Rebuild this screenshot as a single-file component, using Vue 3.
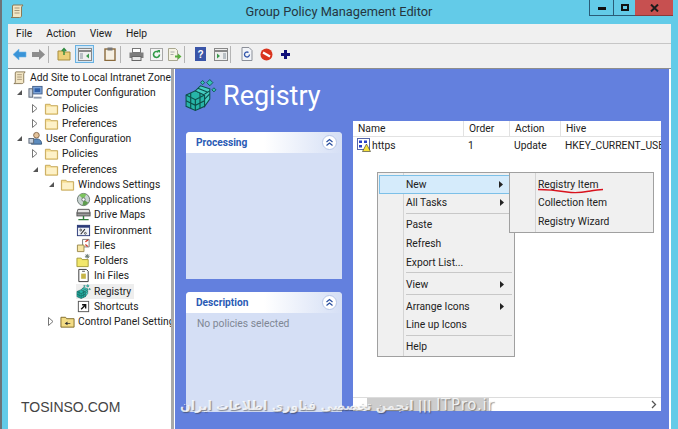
<template>
  <div class="window">
    <svg class="defs" width="0" height="0">
      <defs>
        <symbol id="ico-folder" viewBox="0 0 16 16">
          <path d="M1.500 3.500h5l1 1.500h7v9h-13z" fill="#f6dc8e" stroke="#c4a85a" />
          <path d="M2.500 6h11v7h-11z" fill="#fdf1c8" />
        </symbol>
        <symbol id="ico-script" viewBox="0 0 16 16">
          <path d="M4 2h10l-1.500 2v9c0 1-1 1.500-2 1.500H2c1 0 1.500-.5 1.500-1.500V3z" fill="#f3e6c4" stroke="#8a7a58" />
          <path d="M5.500 5h5M5.500 7.500h5M5.500 10h5" stroke="#a8987a" />
        </symbol>
        <symbol id="ico-computer" viewBox="0 0 16 16">
          <rect x="5" y="1.500" width="10" height="8" fill="#7da4d8" stroke="#44618c" />
          <rect x="1" y="4" width="4" height="9" fill="#c5cfdc" stroke="#5b6675" />
          <path d="M6 12.500h8.500v2H6z" fill="#8f9bad" />
          <path d="M7 3.500h6v4H7z" fill="#2f5fa8" />
        </symbol>
        <symbol id="ico-user" viewBox="0 0 16 16">
          <circle cx="9" cy="4.500" r="3" fill="#e3c39c" stroke="#85684a" />
          <path d="M3.500 14c0-4 2-5.500 5.500-5.500s5.500 1.500 5.500 5.500z" fill="#5c8bbd" stroke="#37597f" />
          <rect x="1" y="8" width="5" height="5" fill="#c5cfdc" stroke="#5b6675" />
        </symbol>
        <symbol id="ico-apps" viewBox="0 0 16 16">
          <circle cx="8" cy="8" r="6.500" fill="#c9d4d2" stroke="#66736f" />
          <path d="M8 8 3.500 3.500A6.500 6.500 0 0 1 11 2.500z" fill="#7cc35e" />
          <path d="M8 8l5 3.500A6.500 6.500 0 0 1 7 14.400z" fill="#5e9d4d" />
          <circle cx="8" cy="8" r="1.800" fill="#fff" stroke="#66736f" />
        </symbol>
        <symbol id="ico-drive" viewBox="0 0 16 16">
          <path d="M2 2.500h12l1 4H1z" fill="#e4e4e4" stroke="#555" />
          <rect x="1" y="6.500" width="14" height="3" fill="#9c9c9c" stroke="#555" />
          <path d="M8 9.500V13M2.500 13.500h11" stroke="#2f7d3a" stroke-width="1.500" />
        </symbol>
        <symbol id="ico-env" viewBox="0 0 16 16">
          <rect x="1.500" y="2.500" width="13" height="11" fill="#eef1f7" stroke="#2b3a78" />
          <rect x="1.500" y="2.500" width="13" height="2.500" fill="#2b3a78" />
          <path d="M5 12l4.500-5.500" stroke="#333" stroke-width="1.200" />
          <circle cx="5" cy="7.500" r="1" fill="none" stroke="#333" stroke-width=".8" />
          <circle cx="10" cy="11" r="1" fill="none" stroke="#333" stroke-width=".8" />
        </symbol>
        <symbol id="ico-files" viewBox="0 0 16 16">
          <path d="M7 1.500h7v8H7z" fill="#fff" stroke="#777" />
          <path d="M1.500 7.500h7v7h-7z" fill="#f7e6a6" stroke="#9b8a4c" />
          <path d="M10 4l3-2M10 7l2.500 2" stroke="#d23a2a" stroke-width="1.400" />
        </symbol>
        <symbol id="ico-folders" viewBox="0 0 16 16">
          <path d="M1 5.500h4.500l1 1.500h6.500v7.500H1z" fill="#f2e76b" stroke="#a49a36" />
          <path d="M12 1v5M9.500 3.500h5M10.200 1.700l3.600 3.600M13.800 1.700l-3.600 3.600" stroke="#6a7a70" />
        </symbol>
        <symbol id="ico-ini" viewBox="0 0 16 16">
          <path d="M3 1.500h8l2 2v11H3z" fill="#fff" stroke="#333" />
          <path d="M5.500 6h5v5.500h-5z" fill="#c7b548" />
          <path d="M6.500 3.500h3" stroke="#555" />
        </symbol>
        <symbol id="ico-registry" viewBox="0 0 32 32">
          <path d="M2 16l9-4 9 4v11l-9 4-9-4z" fill="#27b5a8" stroke="#0d4f4a" />
          <path d="M11 12l5-5 9 3v10l-5 7V16z" fill="#46cdc1" stroke="#0d4f4a" />
          <path d="M2 16l9 4.500L20 16M11 20.500V31M6.500 14v15M15.500 14v15M2 21.500l9 4.500 9-4.500M13.500 9.500l9 3.500M20 20l5-5M20 15l5-3" fill="none" stroke="#0d4f4a" stroke-width="1.100" />
          <path d="M25 1l3 3-3 3-3-3zM29 9l2 2-2 2-2-2zM18 2l2 2-2 2-2-2z" fill="#35c0b4" stroke="#0d4f4a" stroke-width=".8" />
        </symbol>
        <symbol id="ico-shortcut" viewBox="0 0 16 16">
          <rect x="2.500" y="2.500" width="11" height="11" fill="#fff" stroke="#555" />
          <path d="M5.500 11l4-4M6.500 6.200h3.800V10" stroke="#111" stroke-width="1.500" fill="none" />
        </symbol>
        <symbol id="ico-panel" viewBox="0 0 16 16">
          <path d="M1 3.500h5l1 1.500h8v9H1z" fill="#f3dc84" stroke="#7e6a2a" />
          <path d="M5 10l3-2v1.500h3v1H8V12z" fill="#333" />
        </symbol>
      </defs>
    </svg>

    <header class="titlebar">
      <svg class="title-icon" width="16" height="16"><use href="#ico-script" /></svg>
      <span class="title-text">Group Policy Management Editor</span>
      <div class="caption">
        <button class="cap cap-min"><i></i></button>
        <button class="cap cap-max"><i></i></button>
        <button class="cap cap-close">
          <svg width="9" height="8" viewBox="0 0 9 8"><path d="M1 .5l7 7M8 .5l-7 7" stroke="#1c1c1c" stroke-width="2" /></svg>
        </button>
      </div>
    </header>

    <div class="body">
      <nav class="menubar">
        <span v-for="m in menus" :key="m">{{ m }}</span>
      </nav>

      <div class="toolbar">
        <svg width="15" height="13" viewBox="0 0 15 13"><path d="M7 1 1 6.500 7 12V9h7V4H7z" fill="#3a94d8" stroke="#6fb6e8" stroke-width=".6" /></svg>
        <svg width="15" height="13" viewBox="0 0 15 13"><path d="M8 1l6 5.500L8 12V9H1V4h7z" fill="#8d8d8d" /></svg>
        <i class="tool-sep"></i>
        <svg width="14" height="14" viewBox="0 0 14 14"><path d="M1 4h5l1 1h6v8H1z" fill="#eccf78" stroke="#a78d3e" /><path d="M7 8V2M4.800 4 7 1.500 9.200 4" stroke="#2f8a3e" stroke-width="1.400" fill="none" /></svg>
        <span class="tool-on">
          <svg width="14" height="13" viewBox="0 0 14 13"><rect x=".5" y=".5" width="13" height="12" fill="#eee" stroke="#888" /><path d="M.5 3h13" stroke="#888" stroke-width="2" /><rect x="2" y="5" width="3" height="6" fill="#b9bfc4" /><path d="M11 5.500 8 8l3 2.500z" fill="#3a9a4c" /></svg>
        </span>
        <svg class="tool-clip" width="12" height="14" viewBox="0 0 12 14"><rect x="1" y="2" width="10" height="11.500" fill="#f6f0e3" stroke="#8a6a3c" stroke-width="1.400" /><rect x="3.500" y=".5" width="5" height="3" fill="#777" /></svg>
        <i class="tool-sep"></i>
        <svg width="15" height="13" viewBox="0 0 15 13"><rect x="3.500" y=".5" width="8" height="4" fill="#fff" stroke="#777" /><rect x=".5" y="4.500" width="14" height="5.500" fill="#7d7d7d" /><rect x="3" y="8.500" width="9" height="4" fill="#e8e8e8" stroke="#666" /></svg>
        <svg class="ml2" width="13" height="13" viewBox="0 0 13 13"><rect x=".5" y=".5" width="12" height="12" fill="#f4f4f4" stroke="#a8a8a8" /><path d="M9.500 6.500a3 3 0 1 1-1-2.300" stroke="#2f9a46" stroke-width="1.600" fill="none" /><path d="M7 2h3v3z" fill="#2f9a46" /></svg>
        <svg width="15" height="13" viewBox="0 0 15 13"><path d="M1.500.5h7l2 2v10h-9z" fill="#f5f3e4" stroke="#a8a68f" /><path d="M3.500 4h4M3.500 6.500h3" stroke="#aaa" /><path d="M8 7.500h3V5.500l3.500 3-3.500 3V9.500H8z" fill="#58ad3c" /></svg>
        <i class="tool-sep"></i>
        <svg class="ml2" width="11" height="14" viewBox="0 0 11 14"><rect width="11" height="14" fill="#3a55a8" /><text x="5.500" y="11" font-size="10" font-weight="700" font-family="Liberation Sans" fill="#fff" text-anchor="middle">?</text></svg>
        <svg class="ml4" width="14" height="13" viewBox="0 0 14 13"><rect x=".5" y=".5" width="13" height="12" fill="#eee" stroke="#888" /><path d="M.5 3h13" stroke="#888" stroke-width="2" /><rect x="9" y="5" width="3" height="6" fill="#b9bfc4" /><path d="M3 5.500 6 8l-3 2.500z" fill="#3a9a4c" /></svg>
        <i class="tool-sep"></i>
        <svg class="ml2" width="12" height="14" viewBox="0 0 12 14"><path d="M1 .5h7l3 3v10H1z" fill="#f2f4f8" stroke="#8b8f98" /><path d="M8.500 7.500a2.500 2.500 0 1 1-1-2" stroke="#3355aa" stroke-width="1.300" fill="none" /></svg>
        <svg class="ml3" width="13" height="13" viewBox="0 0 13 13"><circle cx="6.500" cy="6.500" r="6" fill="#d9341e" /><path d="M3 4.500l7 4" stroke="#fff" stroke-width="2.200" /></svg>
        <svg class="ml4" width="9" height="9" viewBox="0 0 9 9"><path d="M3 0h3v3h3v3H6v3H3V6H0V3h3z" fill="#10107a" /></svg>
      </div>

      <main class="content">
        <aside class="tree">
          <div
            v-for="row in treeRows"
            :key="row.label"
            class="tree-row"
            :style="{ paddingLeft: row.level * 16 + 4 + 'px' }"
          >
            <span class="twisty">
              <svg v-if="row.arrow === 'open'" width="7" height="7" viewBox="0 0 7 7"><path d="M6 1v5H1z" fill="#555" /></svg>
              <svg v-else-if="row.arrow === 'closed'" width="6" height="9" viewBox="0 0 6 9"><path d="M.5.500l4.500 4-4.500 4z" fill="#fff" stroke="#777" /></svg>
            </span>
            <span class="tree-item" :class="{ selected: row.selected }">
              <svg width="15" height="15"><use :href="'#ico-' + row.icon" /></svg>
              <span class="tree-label">{{ row.label }}</span>
            </span>
          </div>
        </aside>

        <section class="pane">
          <div class="pane-head">
            <svg width="33" height="36" viewBox="0 0 32 32"><use href="#ico-registry" /></svg>
            <h1>Registry</h1>
          </div>
          <div class="pane-main">
            <div class="side">
              <div class="task task-top">
                <div class="task-head">
                  <span>Processing</span>
                  <b class="collapse"><svg width="9" height="9" viewBox="0 0 9 9"><path d="M1.500 4 4.500 1.500 7.500 4M1.500 7.500l3-2.500 3 2.500" fill="none" stroke="#2a4f9f" stroke-width="1.200" /></svg></b>
                </div>
              </div>
              <div class="task task-bottom">
                <div class="task-head">
                  <span>Description</span>
                  <b class="collapse"><svg width="9" height="9" viewBox="0 0 9 9"><path d="M1.500 4 4.500 1.500 7.500 4M1.500 7.500l3-2.500 3 2.500" fill="none" stroke="#2a4f9f" stroke-width="1.200" /></svg></b>
                </div>
                <p>No policies selected</p>
              </div>
            </div>

            <div class="list">
              <div class="list-head">
                <span class="col-name">Name</span>
                <span class="col-order">Order</span>
                <span class="col-action">Action</span>
                <span class="col-hive">Hive</span>
              </div>
              <div class="list-row">
                <span class="col-name list-name">
                  <svg width="14" height="14" viewBox="0 0 14 14">
                    <rect x=".5" y=".5" width="12" height="11" fill="#fff" stroke="#5566aa" />
                    <path d="M2 2.500h3v2.500H2zM7 2.500h3v2.500H7zM2 7h3v2.500H2z" fill="#2740c8" />
                    <path d="M9.500 6 13.500 13.500h-8z" fill="#f7e23c" stroke="#333" stroke-width=".6" />
                  </svg>
                  https
                </span>
                <span class="col-order">1</span>
                <span class="col-action">Update</span>
                <span class="col-hive">HKEY_CURRENT_USER</span>
              </div>
              <div class="list-fill"></div>
              <div class="hscroll">
                <i class="thumb"></i>
                <svg width="6" height="9" viewBox="0 0 6 9"><path d="M1 1l3.500 3.500L1 8" fill="none" stroke="#555" stroke-width="1.300" /></svg>
              </div>
            </div>
          </div>
        </section>
      </main>
    </div>

    <div class="menu menu-main">
      <template v-for="(item, i) in contextMenu" :key="i">
        <i v-if="item === '-'" class="menu-sep"></i>
        <div v-else class="menu-item" :class="{ hot: item.hot }">
          <span>{{ item.label }}</span>
          <svg v-if="item.sub" width="4" height="7" viewBox="0 0 4 7"><path d="M0 0l4 3.500L0 7z" fill="#222" /></svg>
        </div>
      </template>
    </div>

    <div class="menu menu-sub">
      <div v-for="item in subMenu" :key="item" class="menu-item"><span>{{ item }}</span></div>
      <svg class="scribble" width="68" height="6" viewBox="0 0 68 6">
        <path d="M1 1.500C12 1.500 20 2.500 30 4s15 .5 22-.8 10-1.700 14-1.700" fill="none" stroke="#d8121d" stroke-width="1.400" />
      </svg>
    </div>

    <span class="mark mark-site">TOSINSO.COM</span>
    <span class="mark mark-forum" dir="ltr"><bdi>انجمن تخصصی فناوری اطلاعات ایران</bdi> ||| <em>ITPro.ir</em></span>
  </div>
</template>

<script setup>
const menus = ['File', 'Action', 'View', 'Help']

const treeRows = [
  { label: 'Add Site to Local Intranet Zone', level: 0, icon: 'script' },
  { label: 'Computer Configuration', level: 1, icon: 'computer', arrow: 'open' },
  { label: 'Policies', level: 2, icon: 'folder', arrow: 'closed' },
  { label: 'Preferences', level: 2, icon: 'folder', arrow: 'closed' },
  { label: 'User Configuration', level: 1, icon: 'user', arrow: 'open' },
  { label: 'Policies ', level: 2, icon: 'folder', arrow: 'closed' },
  { label: 'Preferences ', level: 2, icon: 'folder', arrow: 'open' },
  { label: 'Windows Settings', level: 3, icon: 'folder', arrow: 'open' },
  { label: 'Applications', level: 4, icon: 'apps' },
  { label: 'Drive Maps', level: 4, icon: 'drive' },
  { label: 'Environment', level: 4, icon: 'env' },
  { label: 'Files', level: 4, icon: 'files' },
  { label: 'Folders', level: 4, icon: 'folders' },
  { label: 'Ini Files', level: 4, icon: 'ini' },
  { label: 'Registry', level: 4, icon: 'registry', selected: true },
  { label: 'Shortcuts', level: 4, icon: 'shortcut' },
  { label: 'Control Panel Settings', level: 3, icon: 'panel', arrow: 'closed' }
]

const contextMenu = [
  { label: 'New', sub: true, hot: true },
  { label: 'All Tasks', sub: true },
  '-',
  { label: 'Paste' },
  { label: 'Refresh' },
  { label: 'Export List...' },
  '-',
  { label: 'View', sub: true },
  '-',
  { label: 'Arrange Icons', sub: true },
  { label: 'Line up Icons' },
  '-',
  { label: 'Help' }
]

const subMenu = ['Registry Item', 'Collection Item', 'Registry Wizard']
</script>

<style>
html,
body {
  margin: 0;
  overflow: hidden;
}
</style>

<style scoped>
.window {
  position: relative;
  width: 678px;
  height: 429px;
  overflow: hidden;
  background: #63cbe8;
  font-family: Roboto, "Noto Sans", sans-serif;
  font-size: 10.300px;
  color: #222;
  display: flex;
  flex-direction: column;
  box-sizing: border-box;
  border-left: 2px solid #6d7378;
}

.defs {
  position: absolute;
}

.titlebar {
  display: grid;
  grid-template-columns: 1fr auto 1fr;
  align-items: start;
  height: 24px;
  flex: none;
  padding: 0 5px 0 7px;
}

.title-icon {
  margin-top: 3px;
}

.title-text {
  font-size: 12.800px;
  line-height: 23px;
  padding-right: 4px;
  color: #26363f;
}

.caption {
  justify-self: end;
  display: flex;
  height: 16px;
}

.cap {
  border: 0;
  padding: 0;
  height: 16px;
  display: flex;
  align-items: center;
  justify-content: center;
  background: transparent;
  box-sizing: border-box;
}

.cap-min {
  width: 24px;
  border-left: 1px solid #2a5c78;
  border-bottom: 1px solid #2a5c78;
}

.cap-min i {
  width: 8px;
  height: 3px;
  margin-top: 2px;
  background: #111;
}

.cap-max {
  width: 22px;
  border-left: 1px solid #2a5c78;
  border-bottom: 1px solid #2a5c78;
}

.cap-max i {
  width: 8px;
  height: 7px;
  box-sizing: border-box;
  border: 2px solid #111;
}

.cap-close {
  width: 38px;
  background: #c75050;
  border-bottom: 1px solid #8a3a3a;
}

.body {
  flex: 1;
  min-height: 0;
  margin: 0 7px 0 6px;
  display: flex;
  flex-direction: column;
  background: #f0f0f0;
}

.menubar {
  height: 20px;
  flex: none;
  display: flex;
  align-items: center;
  gap: 14px;
  padding-left: 8px;
  border-bottom: 1px solid #c6c6c6;
  box-sizing: border-box;
}

.toolbar {
  height: 25px;
  flex: none;
  display: flex;
  align-items: center;
  gap: 4px;
  padding: 0 0 4px 4px;
  border-bottom: 1px solid #8d8d8d;
  box-sizing: border-box;
}

.tool-sep {
  width: 1px;
  height: 17px;
  margin: 0 4px 0 -2px;
  background: #b4b4b4;
}

.tool-on {
  width: 19px;
  height: 18px;
  box-sizing: border-box;
  border: 1px solid #69b2e2;
  background: #cfe6f6;
  display: flex;
  align-items: center;
  justify-content: center;
}

.tool-clip {
  margin: 0 2px 0 6px;
}

.ml2 {
  margin-left: 2px;
}

.ml3 {
  margin-left: 3px;
}

.ml4 {
  margin-left: 4px;
}

.content {
  flex: 1;
  min-height: 0;
  display: flex;
  background: #fff;
}

.tree {
  width: 163px;
  flex: none;
  padding-top: 1px;
  overflow: hidden;
  border-right: 3px solid #a9a9a9;
  box-sizing: content-box;
}

.tree-row {
  height: 15.250px;
  display: flex;
  align-items: center;
  white-space: nowrap;
}

.twisty {
  width: 18px;
  margin-left: -18px;
  display: flex;
  justify-content: center;
  flex: none;
}

.tree-item {
  display: flex;
  align-items: center;
  gap: 3px;
  height: 15px;
  padding-right: 3px;
}

.tree-item.selected {
  background: #eee;
}

.tree-label {
  line-height: 15px;
}

.pane {
  flex: 1;
  min-width: 0;
  margin-left: 1px;
  margin-right: 2px;
  background: #6380de;
  display: flex;
  flex-direction: column;
}

.pane-head {
  height: 52px;
  flex: none;
  display: flex;
  align-items: center;
  gap: 6px;
  padding-left: 9px;
  box-sizing: border-box;
}

.pane-head h1 {
  margin: 3px 0 0;
  font-size: 27px;
  font-weight: 400;
  color: #fff;
  line-height: 1;
}

.pane-main {
  flex: 1;
  display: flex;
  gap: 11px;
  padding: 0 8px 18px 11px;
  min-height: 0;
}

.side {
  width: 156px;
  flex: none;
  padding-top: 11px;
  display: flex;
  flex-direction: column;
  gap: 13px;
}

.task {
  background: #d5dff5;
  border-radius: 4px 4px 0 0;
}

.task-top {
  height: 147px;
}

.task-bottom {
  flex: 1;
  margin-bottom: -1px;
}

.task-head {
  height: 21px;
  display: flex;
  align-items: center;
  justify-content: space-between;
  padding: 0 5px 0 10px;
  border-radius: 4px 4px 0 0;
  background: linear-gradient(90deg, #fff 50%, #d5dff5);
  color: #2a5bb5;
  font-weight: 700;
  font-size: 10.200px;
}

.collapse {
  width: 13px;
  height: 13px;
  border-radius: 50%;
  background: #fff;
  border: 1px solid #b7c6e8;
  display: flex;
  align-items: center;
  justify-content: center;
}

.task p {
  margin: 4px 0 0 11px;
  color: #7f8794;
}

.list {
  flex: 1;
  min-width: 0;
  background: #fff;
  display: flex;
  flex-direction: column;
  overflow: hidden;
}

.list-head {
  height: 16px;
  flex: none;
  display: flex;
  align-items: center;
  border-bottom: 1px solid #e2e2e2;
  box-sizing: border-box;
}

.list-head span + span {
  border-left: 1px solid #e2e2e2;
  height: 100%;
  line-height: 15px;
}

.list-row {
  height: 16px;
  flex: none;
  display: flex;
  align-items: center;
}

.col-name {
  width: 110px;
  padding-left: 5px;
  box-sizing: border-box;
  flex: none;
}

.col-order {
  width: 46px;
  padding-left: 5px;
  box-sizing: border-box;
  flex: none;
}

.col-action {
  width: 51px;
  padding-left: 5px;
  box-sizing: border-box;
  flex: none;
}

.col-hive {
  width: 101px;
  padding-left: 5px;
  box-sizing: border-box;
  flex: none;
  white-space: nowrap;
  overflow: hidden;
}

.list-name {
  display: flex;
  align-items: center;
  gap: 1px;
  padding-left: 4px;
}

.list-fill {
  flex: 1;
}

.hscroll {
  height: 14px;
  flex: none;
  display: flex;
  align-items: center;
  justify-content: space-between;
  padding: 0 4px 0 14px;
  background: #fff;
  border-top: 1px solid #dcdcdc;
  box-sizing: border-box;
}

.thumb {
  width: 122px;
  height: 13px;
  background: #cdcdcd;
}

.menu {
  position: absolute;
  box-sizing: border-box;
  border: 1px solid #a0a0a0;
  padding: 2px 2px;
  background: linear-gradient(90deg, #f0f0f0 25px, #d4d4d4 25px, #d4d4d4 26px, #f0f0f0 26px);
}

.menu-main {
  left: 375px;
  top: 172px;
  width: 138px;
  height: 185px;
}

.menu-sub {
  left: 507px;
  top: 172px;
  width: 145px;
  height: 61px;
}

.menu-item {
  height: 18.600px;
  display: flex;
  align-items: center;
  justify-content: space-between;
  padding: 0 8px 0 26px;
  box-sizing: border-box;
}

.menu-item.hot {
  background: #d5ebfb;
  border: 1px solid #7cc0e8;
  margin: 0 -2px 0 -1px;
  padding: 0 10px 0 26px;
}

.menu-sep {
  display: block;
  height: 1px;
  margin: 1px 0 1.400px 26px;
  background: #c8c8c8;
}

.scribble {
  position: absolute;
  left: 27px;
  top: 15px;
}

.mark {
  position: absolute;
  white-space: nowrap;
}

.mark-site {
  left: 19px;
  top: 399px;
  font-family: "Liberation Sans", sans-serif;
  font-size: 14px;
  color: #444;
  text-shadow: 0 0 1px #fff;
}

.mark-forum {
  left: 178px;
  top: 396px;
  font-family: "DejaVu Sans", sans-serif;
  font-size: 12.500px;
  font-weight: 700;
  letter-spacing: .3px;
  color: rgba(255, 255, 255, .82);
  text-shadow: 1px 1px 1px rgba(60, 60, 60, .55);
}

.mark-forum em {
  font-style: normal;
  font-weight: 400;
  font-size: 15px;
  letter-spacing: .8px;
}
</style>
